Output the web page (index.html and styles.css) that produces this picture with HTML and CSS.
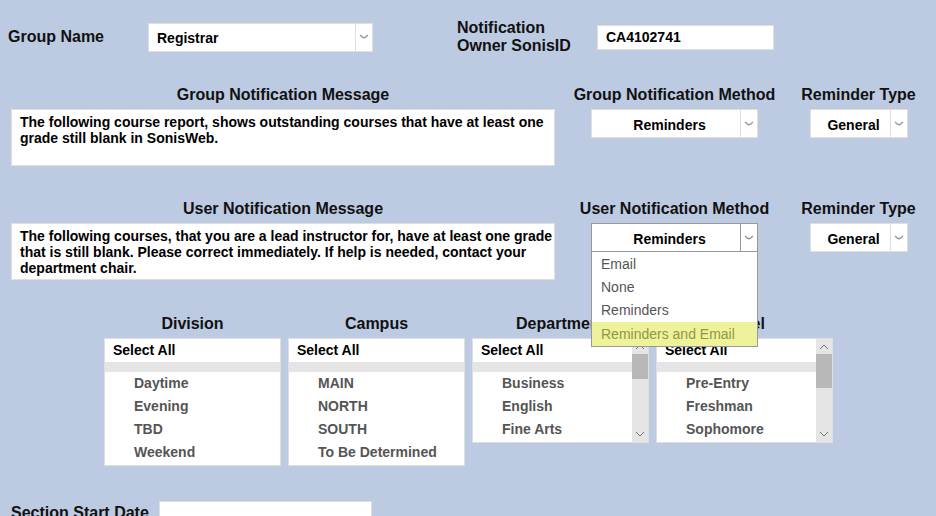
FILE: index.html
```html
<!DOCTYPE html>
<html lang="en">
<head>
    <meta charset="utf-8">
    <title>Notification Group</title>
    <link rel="stylesheet" href="styles.css">
</head>
<body>
    <form class="notify-form">
        <div class="owner-row">
            <label for="group-name">Group Name</label>
            <div class="dropdown dropdown-name">
                <select id="group-name"><option>Registrar</option></select>
                <span class="arrow"><svg width="10" height="6" viewBox="0 0 10 6"><path d="M1 1L3.5 3.2Q5 4.3 6.5 3.2L9 1"/></svg></span>
            </div>
            <label for="owner-id" class="owner-label">Notification Owner SonisID</label>
            <input type="text" id="owner-id" class="owner-input" value="CA4102741">
        </div>

        <div class="message-row">
            <div class="field">
                <label for="group-message">Group Notification Message</label>
                <textarea id="group-message">The following course report, shows outstanding courses that have at least one grade still blank in SonisWeb.</textarea>
            </div>
            <div class="field">
                <label for="group-method">Group Notification Method</label>
                <div class="dropdown dropdown-method">
                    <select id="group-method"><option>Reminders</option></select>
                    <span class="arrow"><svg width="10" height="6" viewBox="0 0 10 6"><path d="M1 1L3.5 3.2Q5 4.3 6.5 3.2L9 1"/></svg></span>
                </div>
            </div>
            <div class="field">
                <label for="group-type">Reminder Type</label>
                <div class="dropdown dropdown-type">
                    <select id="group-type"><option>General</option></select>
                    <span class="arrow"><svg width="10" height="6" viewBox="0 0 10 6"><path d="M1 1L3.5 3.2Q5 4.3 6.5 3.2L9 1"/></svg></span>
                </div>
            </div>
        </div>

        <div class="message-row">
            <div class="field">
                <label for="user-message">User Notification Message</label>
                <textarea id="user-message">The following courses, that you are a lead instructor for, have at least one grade that is still blank. Please correct immediately. If help is needed, contact your department chair.</textarea>
            </div>
            <div class="field">
                <label for="user-method">User Notification Method</label>
                <div class="dropdown dropdown-method open">
                    <select id="user-method"><option>Reminders</option></select>
                    <span class="arrow"><svg width="10" height="6" viewBox="0 0 10 6"><path d="M1 1L3.5 3.2Q5 4.3 6.5 3.2L9 1"/></svg></span>
                    <ul class="menu">
                        <li>Email</li>
                        <li>None</li>
                        <li>Reminders</li>
                        <li class="active">Reminders and Email</li>
                    </ul>
                </div>
            </div>
            <div class="field">
                <label for="user-type">Reminder Type</label>
                <div class="dropdown dropdown-type">
                    <select id="user-type"><option>General</option></select>
                    <span class="arrow"><svg width="10" height="6" viewBox="0 0 10 6"><path d="M1 1L3.5 3.2Q5 4.3 6.5 3.2L9 1"/></svg></span>
                </div>
            </div>
        </div>

        <div class="filter-row">
            <div class="field">
                <label for="division">Division</label>
                <div class="listbox">
                    <select id="division" multiple size="6">
                        <option class="all">Select All</option>
                        <option class="divider" disabled></option>
                        <option>Daytime</option>
                        <option>Evening</option>
                        <option>TBD</option>
                        <option>Weekend</option>
                    </select>
                </div>
            </div>
            <div class="field">
                <label for="campus">Campus</label>
                <div class="listbox">
                    <select id="campus" multiple size="6">
                        <option class="all">Select All</option>
                        <option class="divider" disabled></option>
                        <option>MAIN</option>
                        <option>NORTH</option>
                        <option>SOUTH</option>
                        <option>To Be Determined</option>
                    </select>
                </div>
            </div>
            <div class="field">
                <label for="department">Department</label>
                <div class="listbox short">
                    <select id="department" multiple size="5">
                        <option class="all">Select All</option>
                        <option class="divider" disabled></option>
                        <option>Business</option>
                        <option>English</option>
                        <option>Fine Arts</option>
                    </select>
                    <div class="scroll">
                        <svg width="16" height="15" viewBox="0 0 16 15"><path d="M4 10L8 6L12 10"/></svg>
                        <div class="thumb"></div>
                        <svg class="down" width="16" height="15" viewBox="0 0 16 15"><path d="M4 5L8 9L12 5"/></svg>
                    </div>
                </div>
            </div>
            <div class="field">
                <label for="level">Level</label>
                <div class="listbox short">
                    <select id="level" multiple size="5">
                        <option class="all">Select All</option>
                        <option class="divider" disabled></option>
                        <option>Pre-Entry</option>
                        <option>Freshman</option>
                        <option>Sophomore</option>
                    </select>
                    <div class="scroll">
                        <svg width="16" height="15" viewBox="0 0 16 15"><path d="M4 10L8 6L12 10"/></svg>
                        <div class="thumb thumb-long"></div>
                        <svg class="down" width="16" height="15" viewBox="0 0 16 15"><path d="M4 5L8 9L12 5"/></svg>
                    </div>
                </div>
            </div>
        </div>

        <div class="date-row">
            <label for="start-date">Section Start Date</label>
            <input type="text" id="start-date" class="date-input">
        </div>
    </form>
</body>
</html>
```
FILE: styles.css
```css
* {
    box-sizing: border-box;
}
body {
    margin: 0;
    background-color: #bccae2;
    font-family: Arial, "Liberation Sans", sans-serif;
    font-size: 16px;
    font-weight: bold;
    line-height: 18px;
    color: #111;
}
input, select, textarea {
    font: bold 14px/16px Arial, "Liberation Sans", sans-serif;
    color: #000;
    background-color: white;
    border: 1px solid #dfdfdf;
    border-radius: 0;
    margin: 0;
    outline: none;
}
.owner-row {
    display: grid;
    grid-template-columns: 140px 225px 84px 140px 177px;
    align-items: center;
    padding: 19px 8px 0;
}
.owner-label {
    grid-column: 4;
    width: 120px;
}
.owner-input {
    height: 25px;
    padding: 0 8px;
}

/* dropdowns */
.dropdown {
    position: relative;
    height: 29px;
}
.dropdown select {
    appearance: none;
    display: block;
    width: 100%;
    height: 100%;
    padding: 2px 18px 0 8px;
    text-align-last: center;
}
.dropdown .arrow {
    position: absolute;
    top: 1px;
    right: 1px;
    bottom: 1px;
    width: 17px;
    display: flex;
    align-items: center;
    justify-content: center;
    border-left: 1px solid #dfdfdf;
    pointer-events: none;
}
.arrow path {
    fill: none;
    stroke: #999;
    stroke-width: 1.5;
}
.dropdown-name select {
    text-align-last: left;
}
.dropdown-method {
    width: 167px;
}
.dropdown-type {
    width: 98px;
}
.open select, .open .arrow {
    border-color: #999;
}
.menu {
    position: absolute;
    z-index: 1;
    top: 100%;
    left: 0;
    right: 0;
    margin: 0;
    padding: 1px 0 0;
    list-style: none;
    background-color: white;
    border: 1px solid #999;
    border-top: none;
    font-size: 14px;
    font-weight: normal;
    line-height: 23px;
    color: #555;
}
.menu li {
    padding-left: 9px;
}
.menu .active {
    background-color: #eef29b;
    color: #929744;
    line-height: 24px;
}

/* messages */
.message-row {
    display: grid;
    grid-template-columns: minmax(0, 1fr) 239px 129px;
    padding: 31px 13px 0 11px;
}
.message-row + .message-row {
    padding-top: 34px;
}
.field {
    display: flex;
    flex-direction: column;
    align-items: center;
    gap: 5px;
}
textarea {
    width: 100%;
    height: 57px;
    padding: 4px 0 4px 8px;
    resize: none;
    overflow: hidden;
}

/* filter lists */
.filter-row {
    display: grid;
    grid-template-columns: repeat(4, 177px);
    justify-content: start;
    align-items: start;
    gap: 7px;
    padding: 35px 0 0 104px;
}
.listbox {
    display: flex;
    width: 100%;
    height: 128px;
    background-color: white;
    border: 1px solid #dfdfdf;
}
.listbox.short {
    height: 105px;
}
.listbox select {
    flex: 1;
    min-width: 0;
    height: 100%;
    padding: 0;
    border: none;
    overflow: hidden;
}
.listbox option {
    height: 23px;
    min-height: 0;
    padding: 3px 0 0 29px;
    font-weight: bold;
    color: #555;
}
.listbox .all {
    padding-left: 8px;
    color: #000;
}
.listbox .divider {
    height: 10px;
    padding: 0;
    background-color: #e5e5e5;
}
.scroll {
    display: flex;
    flex-direction: column;
    width: 16px;
    background-color: #e5e5e5;
}
.scroll path {
    fill: none;
    stroke: #777;
}
.scroll .down {
    margin-top: auto;
}
.thumb {
    height: 25px;
    background-color: #b8b8b8;
}
.thumb-long {
    height: 34px;
}

.date-row {
    display: flex;
    gap: 10px;
    padding: 35px 0 0 11px;
}
.date-row label {
    padding-top: 3px;
}
.date-input {
    width: 213px;
    height: 25px;
    padding: 0 8px;
}
```
